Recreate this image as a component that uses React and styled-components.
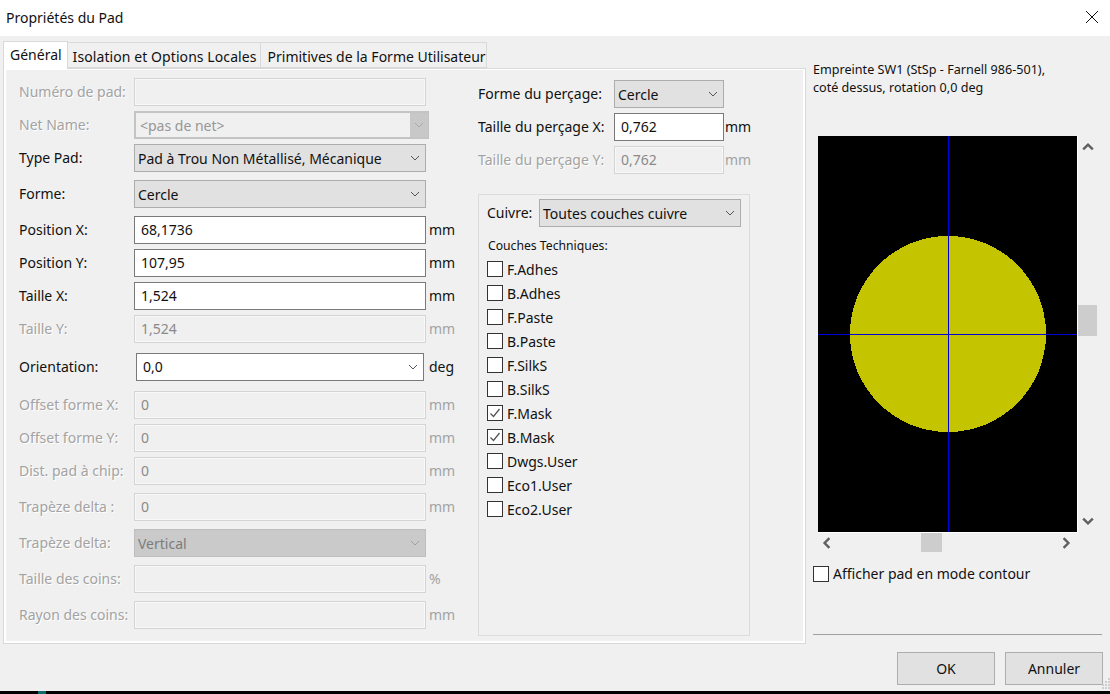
import styled, { createGlobalStyle } from "styled-components";

const GlobalStyle = createGlobalStyle`
    html, body {
        margin: 0;
        padding: 0;
        background: #000;
    }
    * {
        box-sizing: border-box;
    }
`

const leftRows = [
    { label: "Numéro de pad:", kind: "input", off: true, top: 0 },
    { label: "Net Name:", kind: "net", value: "<pas de net>", off: true, top: 5 },
    { label: "Type Pad:", kind: "select", value: "Pad à Trou Non Métallisé, Mécanique", top: 5 },
    { label: "Forme:", kind: "select", value: "Cercle", top: 8 },
    { label: "Position X:", kind: "input", value: "68,1736", unit: "mm", top: 8 },
    { label: "Position Y:", kind: "input", value: "107,95", unit: "mm", top: 5 },
    { label: "Taille X:", kind: "input", value: "1,524", unit: "mm", top: 5 },
    { label: "Taille Y:", kind: "input", value: "1,524", unit: "mm", off: true, top: 5 },
    { label: "Orientation:", kind: "combo", value: "0,0", unit: "deg", top: 10 },
    { label: "Offset forme X:", kind: "input", value: "0", unit: "mm", off: true, top: 10 },
    { label: "Offset forme Y:", kind: "input", value: "0", unit: "mm", off: true, top: 5 },
    { label: "Dist. pad à chip:", kind: "input", value: "0", unit: "mm", off: true, top: 5 },
    { label: "Trapèze delta :", kind: "input", value: "0", unit: "mm", off: true, top: 8 },
    { label: "Trapèze delta:", kind: "select", value: "Vertical", off: true, top: 8 },
    { label: "Taille des coins:", kind: "input", unit: "%", off: true, top: 8 },
    { label: "Rayon des coins:", kind: "input", unit: "mm", off: true, top: 8 },
]

const layers = [
    ["F.Adhes", false],
    ["B.Adhes", false],
    ["F.Paste", false],
    ["B.Paste", false],
    ["F.SilkS", false],
    ["B.SilkS", false],
    ["F.Mask", true],
    ["B.Mask", true],
    ["Dwgs.User", false],
    ["Eco1.User", false],
    ["Eco2.User", false],
]

function Chevron({ dir = "down", color = "#555", size = 10, width = 1 }) {
    const paths = {
        down: "M1 3 L5 7 L9 3",
        up: "M1 7 L5 3 L9 7",
        left: "M7 1 L3 5 L7 9",
        right: "M3 1 L7 5 L3 9",
    }
    return (
        <svg width={size} height={size} viewBox="0 0 10 10" fill="none">
            <path d={paths[dir]} stroke={color} strokeWidth={width} />
        </svg>
    )
}

function Check({ checked }) {
    return (
        <CheckBox>
            {checked && (
                <svg width="14" height="14" viewBox="0 0 14 14" fill="none">
                    <path d="M2.5 7.5 L5.5 10.5 L11.5 3" stroke="#555" strokeWidth="1.3" />
                </svg>
            )}
        </CheckBox>
    )
}

function Field({ row }) {
    if (row.kind === "net") {
        return (
            <NetSelect>
                <span>{row.value}</span>
                <NetArrow>
                    <Chevron color="#a8a8a8" />
                </NetArrow>
            </NetSelect>
        )
    }
    if (row.kind === "select") {
        return (
            <Select $off={row.off}>
                <span>{row.value}</span>
                <Chevron color={row.off ? "#a0a0a0" : "#555"} />
            </Select>
        )
    }
    if (row.kind === "combo") {
        return (
            <Combo>
                <span>{row.value}</span>
                <Chevron />
            </Combo>
        )
    }
    return <Input $off={row.off}><span>{row.value}</span></Input>
}

export default function App() {
    return (
        <Window>
            <GlobalStyle />
            <TitleBar>
                <Title>Propriétés du Pad</Title>
                <CloseIcon width="12" height="12" viewBox="0 0 12 12" fill="none">
                    <path d="M0 0 L12 12 M12 0 L0 12" stroke="#111" strokeWidth="1" />
                </CloseIcon>
            </TitleBar>

            <Body>
                <TabArea>
                    <Tabs>
                        <Tab $active>Général</Tab>
                        <Tab>Isolation et Options Locales</Tab>
                        <Tab $last>Primitives de la Forme Utilisateur</Tab>
                    </Tabs>
                    <TabPanel>
                        <LeftColumn>
                            {leftRows.map((row) => (
                                <Row key={row.label} $top={row.top}>
                                    <Label $off={row.off}>{row.label}</Label>
                                    <Field row={row} />
                                    <Unit $off={row.off}>{row.unit}</Unit>
                                </Row>
                            ))}
                        </LeftColumn>

                        <RightColumn>
                            <DrillRow>
                                <Label>Forme du perçage:</Label>
                                <Select>
                                    <span>Cercle</span>
                                    <Chevron />
                                </Select>
                            </DrillRow>
                            <DrillRow $top={5}>
                                <Label>Taille du perçage X:</Label>
                                <Input><span>0,762</span></Input>
                                <Unit>mm</Unit>
                            </DrillRow>
                            <DrillRow $top={5}>
                                <Label $off>Taille du perçage Y:</Label>
                                <Input $off><span>0,762</span></Input>
                                <Unit $off>mm</Unit>
                            </DrillRow>

                            <LayerGroup>
                                <CopperRow>
                                    <Label>Cuivre:</Label>
                                    <Select>
                                        <span>Toutes couches cuivre</span>
                                        <Chevron />
                                    </Select>
                                </CopperRow>
                                <GroupTitle>Couches Techniques:</GroupTitle>
                                <LayerList>
                                    {layers.map(([name, checked]) => (
                                        <LayerItem key={name}>
                                            <Check checked={checked} />
                                            <span>{name}</span>
                                        </LayerItem>
                                    ))}
                                </LayerList>
                            </LayerGroup>
                        </RightColumn>
                    </TabPanel>
                </TabArea>

                <SidePanel>
                    <Caption>
                        Empreinte SW1 (StSp - Farnell 986-501),
                        <br />
                        coté dessus, rotation 0,0 deg
                    </Caption>

                    <PreviewGrid>
                        <svg width="259" height="396" viewBox="0 0 259 396" shapeRendering="crispEdges">
                            <rect width="259" height="396" fill="#000" />
                            <circle cx="130" cy="198" r="98" fill="#c4c400" />
                            <rect x="130" y="0" width="1" height="396" fill="#0000dc" />
                            <rect x="0" y="198" width="259" height="1" fill="#0000dc" />
                        </svg>
                        <ScrollV>
                            <Chevron dir="up" size={12} width={2} color="#606060" />
                            <ThumbV />
                            <Chevron dir="down" size={12} width={2} color="#606060" />
                        </ScrollV>
                        <ScrollH>
                            <Chevron dir="left" size={12} width={2} color="#606060" />
                            <ThumbH />
                            <Chevron dir="right" size={12} width={2} color="#606060" />
                        </ScrollH>
                    </PreviewGrid>

                    <OutlineOption>
                        <Check />
                        <span>Afficher pad en mode contour</span>
                    </OutlineOption>

                    <Separator />

                    <Buttons>
                        <Button>OK</Button>
                        <Button>Annuler</Button>
                    </Buttons>
                </SidePanel>
            </Body>

            <TaskBar>
                <TaskMark />
            </TaskBar>

            <Grip width="8" height="13" viewBox="0 0 8 13">
                <path d="M6 0h2v2h-2z M6 3h2v2h-2z M3 3h2v2h-2z M6 6h2v2h-2z M3 6h2v2h-2z M0 6h2v2h-2z M6 9h2v2h-2z M3 9h2v2h-2z M0 9h2v2h-2z" fill="#cfcfcf" />
            </Grip>
        </Window>
    )
}

const Window = styled.div`
    position: relative;
    width: 1110px;
    height: 694px;
    overflow: hidden;
    display: flex;
    flex-direction: column;
    font-family: "Noto Sans", "Open Sans", sans-serif;
    font-size: 14px;
    color: #111;
    background: #f0f0f0;
`

const TitleBar = styled.div`
    height: 36px;
    flex: none;
    background: #fff;
    display: flex;
    align-items: center;
    justify-content: space-between;
    padding: 0 12px 0 6px;
`

const Title = styled.div`
    font-size: 14px;
    padding-bottom: 2px;
`

const CloseIcon = styled.svg`
    margin-bottom: 2px;
`

const Body = styled.div`
    flex: 1;
    display: flex;
    align-items: flex-start;
    padding: 5px 0 0 3px;
`

const TabArea = styled.div`
    width: 803px;
    flex: none;
`

const Tabs = styled.div`
    display: flex;
    align-items: flex-end;
    height: 27px;
`

const Tab = styled.div`
    height: ${(p) => (p.$active ? "28px" : "26px")};
    margin-bottom: ${(p) => (p.$active ? "-1px" : "0")};
    padding: ${(p) => (p.$active ? "0 5px 2px 6px" : p.$last ? "2px 0 0 7px" : "2px 3px 0 5px")};
    display: flex;
    align-items: center;
    white-space: nowrap;
    letter-spacing: ${(p) => (p.$active || p.$last ? "0" : "0.08px")};
    background: ${(p) => (p.$active ? "#fff" : "#f0f0f0")};
    border: 1px solid #d9d9d9;
    border-left-width: ${(p) => (p.$active ? "1px" : "0")};
    border-bottom-width: ${(p) => (p.$active ? "0" : "1px")};
    position: relative;
    z-index: ${(p) => (p.$active ? 1 : 0)};
`

const TabPanel = styled.div`
    height: 576px;
    background: #f0f0f0;
    border: 1px solid #d9d9d9;
    box-shadow: inset 2px 1px 0 #fff, inset -2px -2px 0 #fff;
    padding: 9px 0 0 15px;
    display: flex;
    align-items: flex-start;
`

const LeftColumn = styled.div`
    width: 459px;
    flex: none;
    display: flex;
    flex-direction: column;
`

const Row = styled.div`
    display: flex;
    align-items: center;
    height: 28px;
    margin-top: ${(p) => p.$top}px;
`

const Label = styled.div`
    width: 115px;
    flex: none;
    white-space: nowrap;
    padding-bottom: 2px;
    color: ${(p) => (p.$off ? "#a3a3a3" : "#111")};
    text-shadow: ${(p) => (p.$off ? "1px 1px 0 #fff" : "none")};
`

const Input = styled.div`
    width: 292px;
    height: 28px;
    flex: none;
    padding: 0 6px 2px;
    display: flex;
    align-items: center;
    background: ${(p) => (p.$off ? "#f0f0f0" : "#fff")};
    border: 1px solid ${(p) => (p.$off ? "#d4d4d4" : "#7a7a7a")};
    box-shadow: ${(p) => (p.$off ? "inset 0 0 0 1px #f8f8f8" : "none")};
    color: ${(p) => (p.$off ? "#8a8a8a" : "#111")};
`

const Select = styled.div`
    width: 292px;
    height: 28px;
    flex: none;
    padding: 0 5px 0 3px;
    display: flex;
    align-items: center;
    justify-content: space-between;
    white-space: nowrap;
    background: ${(p) => (p.$off ? "#cacaca" : "#e1e1e1")};
    border: 1px solid ${(p) => (p.$off ? "#bebebe" : "#adadad")};
    color: ${(p) => (p.$off ? "#7c7c7c" : "#111")};
`

const NetSelect = styled.div`
    width: 295px;
    height: 28px;
    flex: none;
    margin-right: -3px;
    padding-left: 4px;
    display: flex;
    align-items: center;
    justify-content: space-between;
    background: #f0f0f0;
    border: 2px solid #c4c4c4;
    border-right-width: 1px;
    color: #979797;
`

const NetArrow = styled.div`
    width: 18px;
    align-self: stretch;
    display: flex;
    align-items: center;
    justify-content: center;
    background: #c8c8c8;
`

const Combo = styled.div`
    width: 288px;
    height: 28px;
    flex: none;
    margin: 0 2px;
    padding: 0 5px 2px 6px;
    display: flex;
    align-items: center;
    justify-content: space-between;
    background: #fff;
    border: 1px solid #7a7a7a;

    svg {
        margin-top: 2px;
    }
`

const Unit = styled.div`
    margin-left: 3px;
    padding-bottom: 2px;
    white-space: nowrap;
    color: ${(p) => (p.$off ? "#a3a3a3" : "#111")};
`

const RightColumn = styled.div`
    width: 272px;
    flex: none;
    margin-top: 2px;
    display: flex;
    flex-direction: column;
`

const DrillRow = styled.div`
    display: flex;
    align-items: center;
    height: 28px;
    margin-top: ${(p) => p.$top || 0}px;

    ${Label} {
        width: 136px;
    }
    ${Input} {
        width: 110px;
    }
    ${Select} {
        width: 110px;
    }
    ${Unit} {
        margin-left: 1px;
    }
`

const LayerGroup = styled.div`
    height: 442px;
    margin-top: 20px;
    padding: 4px 8px;
    border: 1px solid #dcdcdc;
`

const CopperRow = styled.div`
    display: flex;
    align-items: center;

    ${Label} {
        width: 52px;
    }
    ${Select} {
        width: 202px;
    }
`

const GroupTitle = styled.div`
    font-size: 12.2px;
    margin: 10px 0 0 1px;
    line-height: 18px;
`

const LayerList = styled.div`
    display: flex;
    flex-direction: column;
    margin-top: 2px;
`

const LayerItem = styled.div`
    height: 24px;
    display: flex;
    align-items: center;
    gap: 4px;
`

const CheckBox = styled.div`
    width: 16px;
    height: 16px;
    flex: none;
    display: flex;
    align-items: center;
    justify-content: center;
    background: #fff;
    border: 1px solid #333;
`

const SidePanel = styled.div`
    width: 290px;
    flex: none;
    margin-left: 7px;
    display: flex;
    flex-direction: column;
`

const Caption = styled.div`
    font-size: 12.6px;
    line-height: 18px;
    margin-top: 20px;
`

const PreviewGrid = styled.div`
    display: grid;
    grid-template-columns: 259px 20px;
    grid-template-rows: 396px 20px;
    margin: 39px 0 0 5px;
`

const ScrollV = styled.div`
    display: flex;
    flex-direction: column;
    align-items: center;
    justify-content: space-between;
    padding: 5px 0;
    border-left: 1px solid #fff;
`

const ThumbV = styled.div`
    width: 19px;
    height: 31px;
    margin-bottom: 28px;
    background: #cdcdcd;
`

const ScrollH = styled.div`
    display: flex;
    align-items: center;
    justify-content: space-between;
    padding: 0 5px 0 3px;
    border-top: 1px solid #fff;
`

const ThumbH = styled.div`
    width: 21px;
    height: 19px;
    margin-right: 31px;
    background: #cdcdcd;
`

const OutlineOption = styled.div`
    display: flex;
    align-items: center;
    gap: 4px;
    margin-top: 12px;
`

const Separator = styled.div`
    height: 1px;
    width: 289px;
    margin-top: 51px;
    background: #a0a0a0;
`

const Buttons = styled.div`
    display: flex;
    justify-content: flex-end;
    gap: 10px;
    width: 290px;
    margin-top: 17px;
`

const Button = styled.div`
    width: 98px;
    height: 33px;
    display: flex;
    align-items: center;
    justify-content: center;
    background: #e1e1e1;
    border: 1px solid #adadad;
`

const TaskBar = styled.div`
    height: 3px;
    flex: none;
    background: #000;
    display: flex;
    padding-left: 38px;
`

const TaskMark = styled.div`
    width: 8px;
    background: #0f6b6b;
`

const Grip = styled.svg`
    position: absolute;
    right: 0;
    bottom: 3px;
`
